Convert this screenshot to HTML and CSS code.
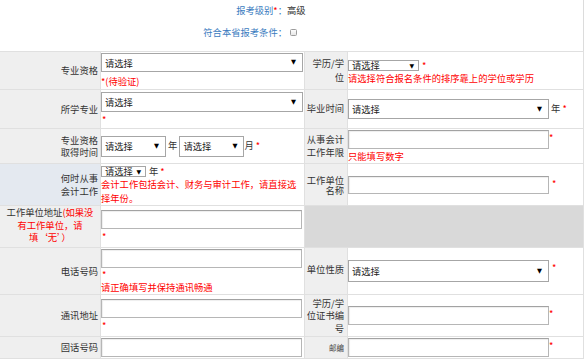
FILE: index.html
```html
<!DOCTYPE html>
<html lang="zh-CN">
<head>
<meta charset="utf-8">
<title>报名信息</title>
<link rel="stylesheet" href="styles.css">
</head>
<body>
<div class="page">
  <div class="head">
    <div class="hrow"><span class="hl">报考级别<i class="req">*</i>：</span><span class="hv">高级</span></div>
    <div class="hrow"><span class="hl">符合本省报考条件：</span><input type="checkbox" class="chk"></div>
  </div>
  <table class="form">
    <tr class="r1">
      <td class="lab c1">专业资格</td>
      <td class="c2"><span class="sel blk w202 h19 mb2"><select><option>请选择</option></select></span><div class="err">*(待验证)</div></td>
      <td class="labr c3">学历/学位</td>
      <td class="c4 pt4"><div class="ln"><span class="sel w71 h11" role="combobox"><span class="opt">请选择</span></span><i class="req s11 ml3">*</i></div><div class="err">请选择符合报名条件的排序靠上的学位或学历</div></td>
    </tr>
    <tr class="r2">
      <td class="lab">所学专业</td>
      <td><span class="sel blk w202 h20"><select><option>请选择</option></select></span><div class="st">*</div></td>
      <td class="labr">毕业时间</td>
      <td><span class="sel w201 h20"><select><option>请选择</option></select></span> 年 <i class="req">*</i></td>
    </tr>
    <tr class="r3">
      <td class="lab">专业资格<br>取得时间</td>
      <td><span class="sel w65 h21"><select><option>请选择</option></select></span> 年 <span class="sel w65 h21"><select><option>请选择</option></select></span>月 <i class="req">*</i></td>
      <td class="labr">从事会计工作年限</td>
      <td><div class="fld"><input class="inp w201 h19" type="text"><i class="req st14">*</i></div><div class="err">只能填写数字</div></td>
    </tr>
    <tr class="r4">
      <td class="lab blue">何时从事<br>会计工作</td>
      <td><div class="ln4"><span class="sel w45 h11" role="combobox"><span class="opt">请选择</span></span><span class="yr">年</span><i class="req s11 ml2">*</i></div><div class="err">会计工作包括会计、财务与审计工作，请直接选择年份。</div></td>
      <td class="labr tight">工作单位名称</td>
      <td><div class="fld"><input class="inp w201 h18" type="text"><i class="req st14 ml3">*</i></div></td>
    </tr>
    <tr class="r5">
      <td class="lab5">工作单位地址<span class="red">(如果没</span><br><span class="red">有工作单位，请</span><br><span class="red">填‘无’）</span></td>
      <td><input class="inp w201 h19" type="text"><div class="st">*</div></td>
      <td class="gray" colspan="2"></td>
    </tr>
    <tr class="r6">
      <td class="lab">电话号码</td>
      <td><input class="inp w201 h19" type="text"><div class="st s12">*</div><div class="err">请正确填写并保持通讯畅通</div></td>
      <td class="labr up">单位性质</td>
      <td><div class="fld"><span class="sel blk w201 h22"><select><option>请选择</option></select></span><i class="req st14 ml3">*</i></div></td>
    </tr>
    <tr class="r7">
      <td class="lab">通讯地址</td>
      <td><input class="inp w201 h19" type="text"><div class="st">*</div></td>
      <td class="labr l13">学历/学位证书编号</td>
      <td><div class="fld"><input class="inp w201 h19" type="text"><i class="req st14">*</i></div></td>
    </tr>
    <tr class="r8">
      <td class="lab">固话号码</td>
      <td><input class="inp w201 h19" type="text"></td>
      <td class="labr"><span class="small">邮编</span></td>
      <td><div class="fld"><input class="inp w201 h19" type="text"><i class="req st14">*</i></div></td>
    </tr>
  </table>
</div>
</body>
</html>
```

FILE: styles.css
```css
* { box-sizing: border-box; }
body {
  margin: 0;
  background: #fff;
  font-family: "Noto Sans CJK SC", "Noto Sans", sans-serif;
  font-size: 9.3px;
  color: #333;
}
.page { width: 584px; }

/* header */
.head {
  height: 51px;
  border-right: 1px solid #dcdcdc;
}
.hrow {
  display: flex;
  align-items: center;
  height: 20px;
}
.hrow + .hrow { margin-top: 2px; }
.hl {
  flex: none;
  width: 287px;
  text-align: right;
  color: #3b7cc0;
}
.hv { color: #333; }
.chk {
  -webkit-appearance: none;
  appearance: none;
  width: 7px;
  height: 7px;
  margin: 0 0 0 3px;
  border: 1px solid #9c9c9c;
  border-radius: 1.5px;
  background: linear-gradient(#fdfdfd, #e6e6e6);
}
.req { color: #f00; font-style: normal; }
.red { color: #f00; }

/* table */
.form {
  border-collapse: separate;
  border-spacing: 0;
  table-layout: fixed;
  width: 584px;
  border-top: 1px solid #e0e0e0;
}
.form td {
  padding: 0;
  border-right: 1px solid #e0e0e0;
  border-bottom: 1px solid #e0e0e0;
  vertical-align: middle;
  line-height: 14px;
  color: #333;
}
.c1 { width: 101px; }
.c2 { width: 204px; }
.c3 { width: 43px; }
.c4 { width: 236px; }

.r1 td { height: 38px; }
.r2 td { height: 39px; }
.r3 td { height: 35px; }
.r4 td { height: 42px; }
.r5 td { height: 42px; }
.r6 td { height: 47px; }
.r7 td { height: 42px; }
.r8 td { height: 22px; }

.form td.lab {
  background: #efefef;
  text-align: right;
  padding-right: 2px;
  line-height: 12.5px;
}
.form td.blue { background: #e4e9f0; }
.form td.labr {
  background: #efefef;
  text-align: right;
  padding-right: 3px;
  line-height: 13.5px;
}
.form td.tight { line-height: 10px; }
.form td.l13 { line-height: 12.5px; }
.form td.up { padding-bottom: 3px; }
.form td.lab5 {
  background: #efefef;
  text-align: center;
  padding: 0 3px 3px;
  line-height: 12.5px;
}
.form td.gray { background: #d9d9d9; }
.form td.pt4 { padding-top: 4px; }

.small { font-size: 7.5px; color: #444; }

/* select */
.sel {
  display: inline-flex;
  align-items: center;
  vertical-align: middle;
  background: #fff;
  border: 1px solid #a6a6a6;
  overflow: hidden;
}
.sel.blk { display: flex; }
.sel.h11 { overflow: visible; }
.sel select {
  -webkit-appearance: none;
  appearance: none;
  flex: 1;
  min-width: 0;
  height: 100%;
  margin: 0;
  padding: 0 0 0 3px;
  border: 0;
  outline: 0;
  background: transparent;
  font: inherit;
  color: #222;
}
.sel .opt {
  flex: 1;
  min-width: 0;
  padding-left: 3px;
  line-height: 9px;
  color: #222;
  white-space: nowrap;
}
.sel::after {
  content: "\25BC";
  flex: none;
  font-family: "DejaVu Sans", sans-serif;
  font-size: 6.5px;
  line-height: 1;
  color: #000;
  margin-right: 6px;
}
.sel.h11::after { margin-right: 4px; font-size: 6px; }

/* input */
.inp {
  display: block;
  margin: 0;
  padding: 0 3px;
  border: 1px solid #b6b6b6;
  border-top-color: #a2a2a2;
  box-shadow: inset 1px 1px 1px rgba(0, 0, 0, 0.07);
  background: #fff;
  font: inherit;
  flex: none;
}

/* sizes */
.w45 { width: 45px; }
.w65 { width: 65px; }
.w71 { width: 71px; }
.w201 { width: 201px; }
.w202 { width: 202px; }
.h11 { height: 11px; }
.h18 { height: 18px; }
.h19 { height: 19px; }
.h20 { height: 20px; }
.h21 { height: 21px; }
.h22 { height: 22px; }
.mb2 { margin-bottom: 2px; }

/* misc rows */
.err { color: #f00; line-height: 14px; }
.st { color: #f00; line-height: 14px; height: 14px; padding-left: 1px; }
.st.s12 { line-height: 12px; height: 12px; }
.ln {
  display: flex;
  align-items: flex-start;
  height: 11px;
}
.ln4 {
  display: flex;
  align-items: flex-end;
  height: 13px;
}
.yr { line-height: 11px; margin-left: 3px; }
.s11 { line-height: 11px; }
.ml2 { margin-left: 2px; }
.ml3 { margin-left: 3px; }
.fld {
  display: flex;
  align-items: flex-start;
}
.st14 { line-height: 14px; }
```
